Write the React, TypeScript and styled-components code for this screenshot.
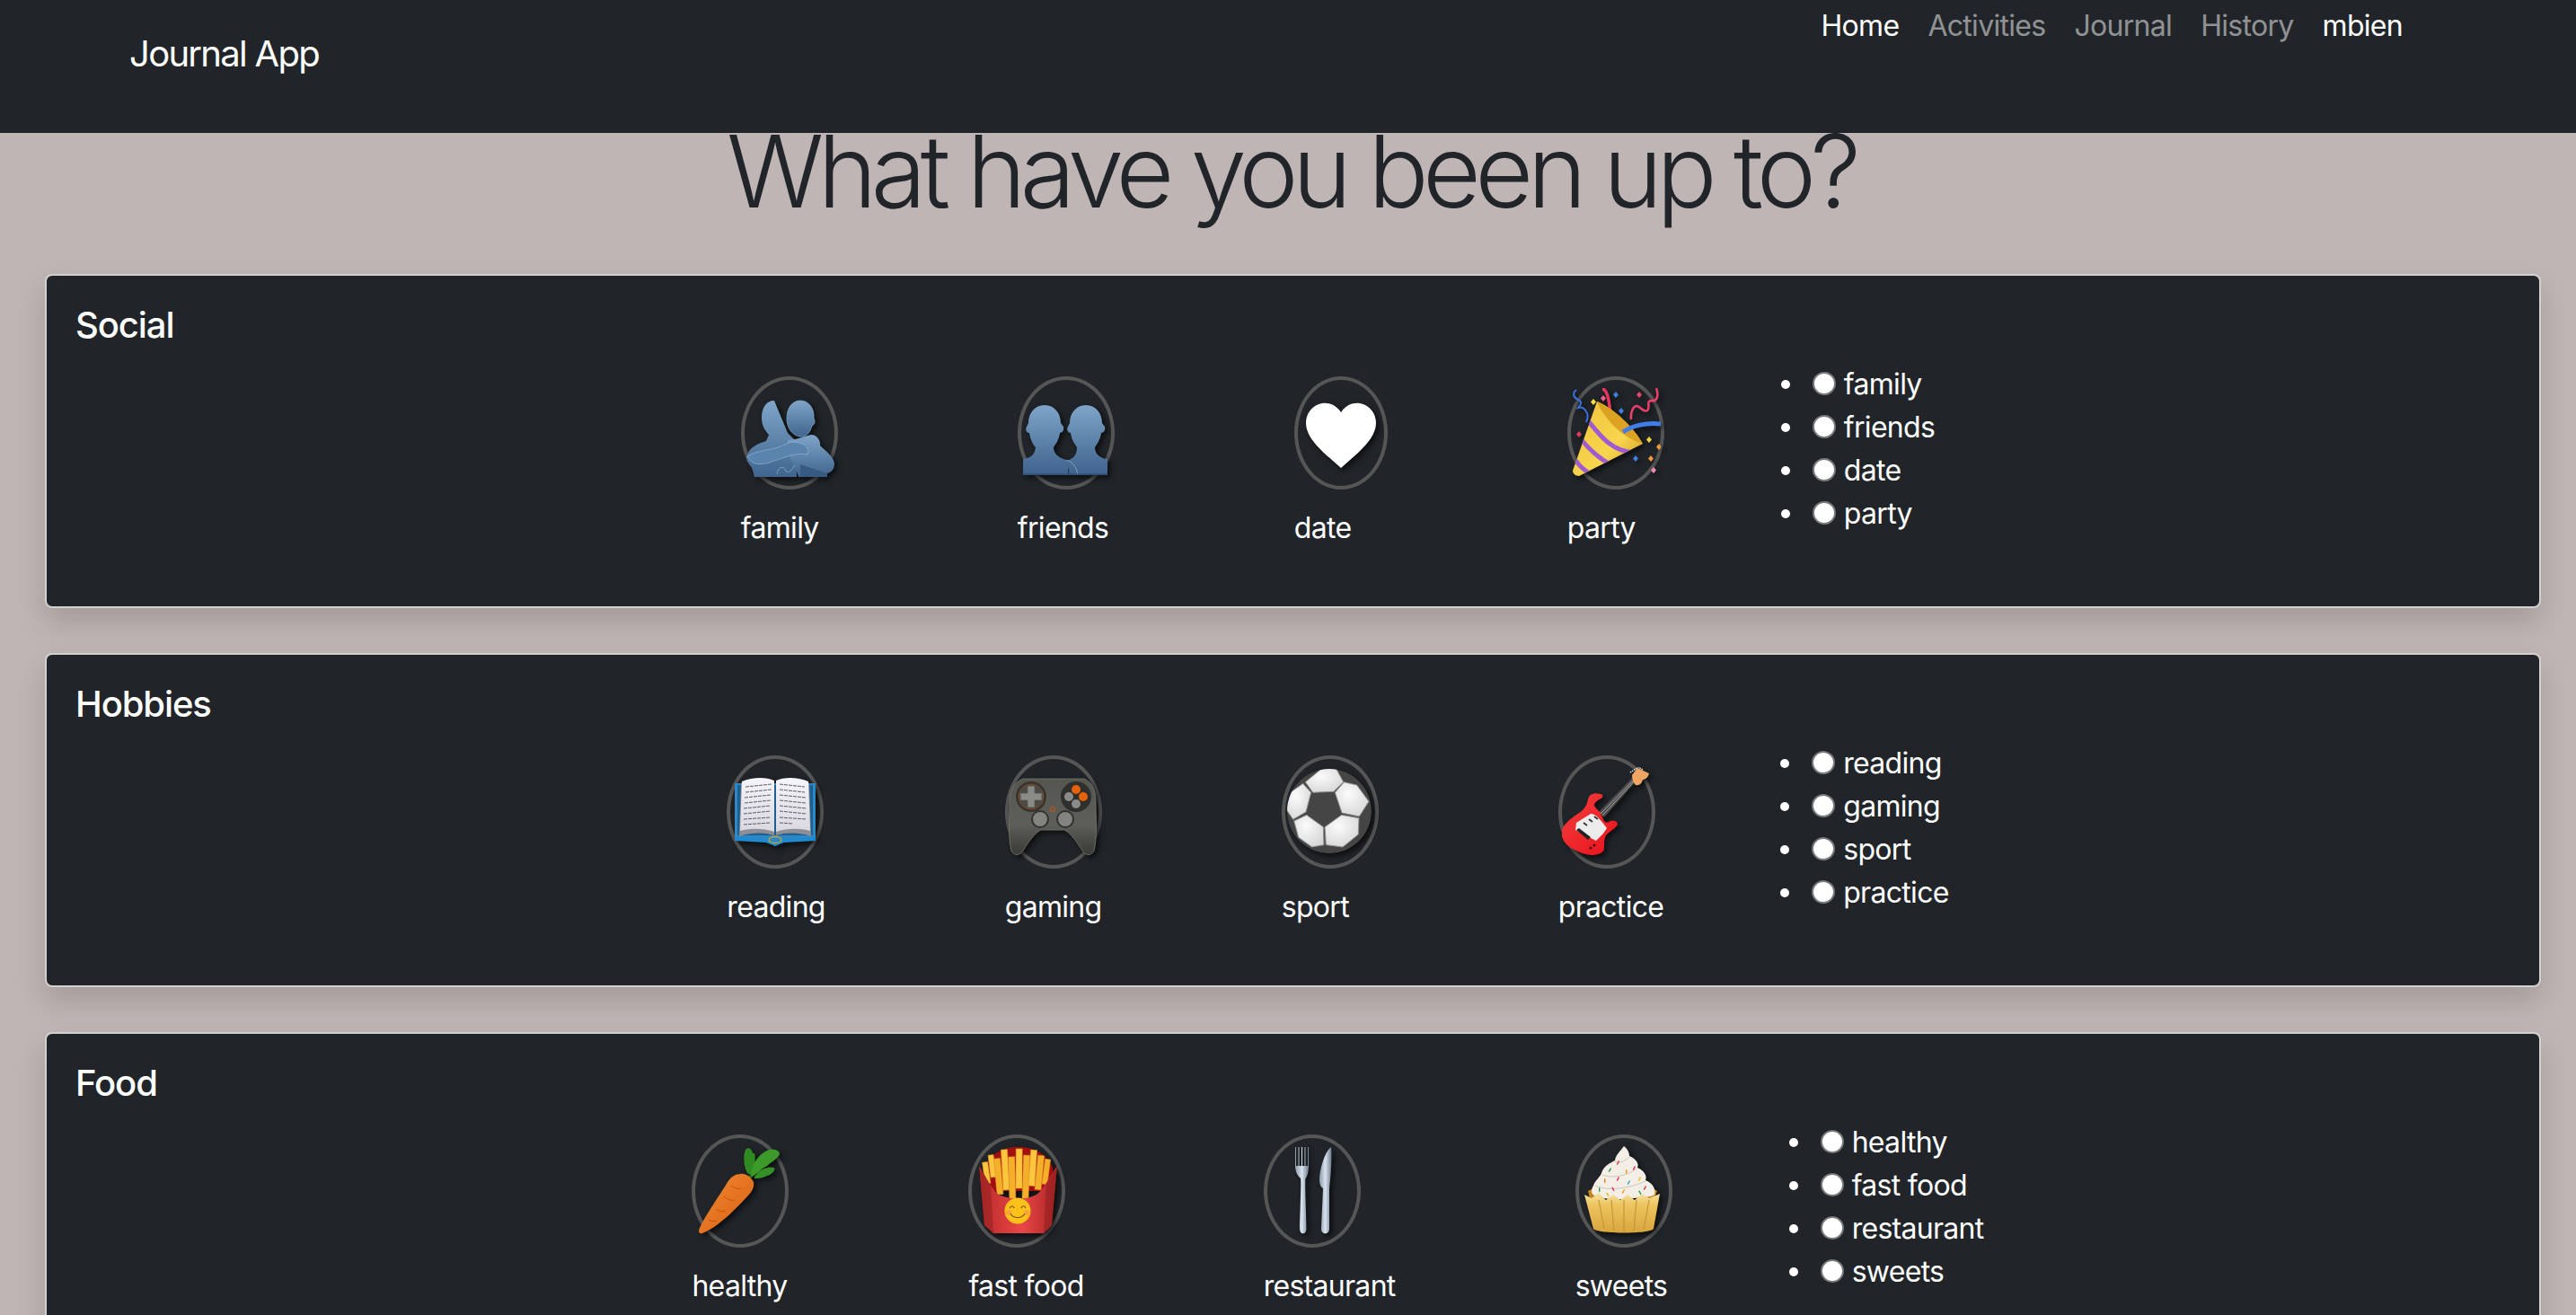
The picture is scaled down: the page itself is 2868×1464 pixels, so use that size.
import React from 'react';
import styled, {createGlobalStyle} from 'styled-components';

const GlobalStyle = createGlobalStyle`
  html, body {
    margin: 0;
    height: 100%;
    overflow: hidden;
    background: #bfb5b4;
  }
  body {
    font-family: Inter, "Liberation Sans", sans-serif;
    font-size: 32px;
    line-height: 48px;
    color: #212529;
  }
`

const Navbar = styled.nav`
  position: relative;
  z-index: 1;
  height: 148px;
  box-sizing: border-box;
  background: #212529;
  display: flex;
  justify-content: space-between;
  align-items: flex-start;
  padding: 5px 177px 0 144px;
`

const Brand = styled.a`
  color: white;
  font-size: 40px;
  line-height: 60px;
  margin-top: 25px;
  letter-spacing: -1.7px;
`

const NavLinks = styled.div`
  display: flex;
`

const NavLink = styled.a<{$active?: boolean}>`
  padding: 0 16px;
  letter-spacing: -0.7px;
  color: ${props => props.$active ? 'white' : 'rgba(255,255,255,.5)'};
`

const Title = styled.h1`
  position: relative;
  z-index: 2;
  margin: -25px 0 48px;
  padding-left: 6px;
  text-align: center;
  font-size: 112px;
  font-weight: 300;
  line-height: 134px;
  letter-spacing: -6.6px;
`

const Cards = styled.main`
  display: flex;
  flex-direction: column;
  gap: 50px;
  padding: 0 39px 0 50px;
`

const Card = styled.section`
  height: 372px;
  flex-shrink: 0;
  box-sizing: border-box;
  border: 2px solid #d3d1cf;
  border-radius: 8px;
  padding: 31px 32px;
  background: #212529;
  color: white;
  box-shadow: 0 16px 32px rgba(0,0,0,.15);
`

const CardTitle = styled.h5`
  margin: 0 0 18px;
  font-size: 40px;
  font-weight: 500;
  line-height: 48px;
  letter-spacing: -1.1px;
`

const Row = styled.div`
  display: flex;
  justify-content: center;
`

const Item = styled.div`
  display: flex;
  flex-direction: column;
  align-items: flex-start;
  margin: 15px 100px 0;
`

const Ring = styled.div<{$narrow?: boolean}>`
  width: ${props => props.$narrow ? 104 : 108}px;
  height: 126px;
  box-sizing: border-box;
  border: 4px solid #565656;
  border-radius: 50%;
  display: flex;
  justify-content: center;
  align-items: center;

  > svg {
    flex-shrink: 0;
    width: 100px;
    height: 100px;
    filter: drop-shadow(3px 3px 3px rgba(0,0,0,.65));
  }
`

const Label = styled.div`
  margin-top: 19px;
  letter-spacing: -0.7px;
`

const Options = styled.ul`
  margin: 0;
  padding: 0 0 0 65px;
  list-style: none;
  letter-spacing: -0.7px;
`

const Option = styled.li`
  position: relative;
  height: 48px;

  &::before {
    content: "";
    position: absolute;
    left: -35px;
    top: 19px;
    width: 10px;
    height: 10px;
    border-radius: 50%;
    background: white;
  }
`

const Radio = styled.input`
  appearance: none;
  width: 26px;
  height: 26px;
  box-sizing: border-box;
  margin: 0 9px 0 0;
  border: 2px solid #77797b;
  border-radius: 50%;
  background: white;
  vertical-align: -1px;
`

const Family = () => (
  <svg viewBox="0 0 100 100">
    <defs>
      <linearGradient id="blue" x1="0" y1="0" x2="0" y2="1">
        <stop offset="0" stopColor="#7fa6c9"/>
        <stop offset="1" stopColor="#3f648e"/>
      </linearGradient>
    </defs>
    <path d="M33 14C24 14 19 22 19 33C19 42 23 48 27 52L24 59C14 62 6 66 3 74C1 79 3 84 8 88L11 99H58L58 60L48 50Z" fill="url(#blue)"/>
    <path d="M62 14C53 14 47 22 47 34C47 44 53 53 62 54C69 55 73 49 75 42C78 41 79 37 77 34C78 22 71 14 62 14Z" fill="url(#blue)" stroke="#86aed0" strokeWidth=".7"/>
    <path d="M48 58C56 58 66 54 74 52C80 52 85 58 84 64C90 70 99 76 100 84C100 91 96 94 92 95V99H60C58 90 50 78 48 72Z" fill="url(#blue)"/>
    <path d="M3 76C16 68 32 70 47 62C53 59 60 60 66 63C70 66 72 70 70 74C58 71 40 79 27 83C17 86 8 86 3 76Z" fill="#5a84ac" stroke="#8db4d4" strokeWidth=".7"/>
    <path d="M36 96C37 89 42 85 46 92C48 96 52 92 56 86" fill="none" stroke="#8db4d4" strokeWidth=".8"/>
    <path d="M62 99V85L92 95V99Z" fill="#365a82"/>
  </svg>
)

const Friends = () => (
  <svg viewBox="0 0 100 100">
    <defs>
      <linearGradient id="bust" x1="0" y1="0" x2="0" y2="1">
        <stop offset="0" stopColor="#7ea5c9"/>
        <stop offset="1" stopColor="#3e628c"/>
      </linearGradient>
    </defs>
    <path d="M26 19C37 19 44 28 44 39L47 43C48 47 46 50 43 50C42 58 38 63 36 66C36 72 40 77 50 80L55 82C52 86 52 92 53 97H2V79C10 78 15 75 16 66C13 63 10 57 9 50C6 50 4 47 6 43L8 39C8 28 15 19 26 19Z" fill="url(#bust)"/>
    <path d="M72 19C83 19 90 28 90 39L93 43C94 47 92 50 89 50C88 58 84 63 82 66C82 72 86 78 96 79V97H53C54 92 52 86 50 82L55 79C60 77 62 72 62 66C60 63 56 58 55 50C52 50 50 47 52 43L54 39C54 28 61 19 72 19Z" fill="url(#bust)"/>
    <path d="M50 80C57 82 62 88 63 97" fill="none" stroke="#86aed0" strokeWidth=".8"/>
    <rect x="2" y="95.5" width="94" height="1.5" fill="#2e4d72"/>
  </svg>
)

const Heart = () => (
  <svg viewBox="0 0 100 100">
    <path d="M50 27C56 18 64 16 71 17C82 19 89 28 89 39C89 57 68 73 50 89C32 73 11 57 11 39C11 28 18 19 29 17C36 16 44 18 50 27Z" fill="white"/>
  </svg>
)

const Party = () => (
  <svg viewBox="0 0 100 100">
    <defs>
      <linearGradient id="cone" x1="0" y1="0" x2="1" y2="1">
        <stop offset="0" stopColor="#f0c13c"/>
        <stop offset=".6" stopColor="#f7d64e"/>
        <stop offset="1" stopColor="#c98d1c"/>
      </linearGradient>
      <clipPath id="coneClip">
        <path d="M29 15C42 19 72 50 80 62L9 98C5 98 2 95 2 92Z"/>
      </clipPath>
    </defs>
    <path d="M6 2C1 6 3 11 8 13C14 16 10 19 8 22C14 20 22 28 17 38" fill="none" stroke="#3b70dd" strokeWidth="2"/>
    <path d="M35 1C42 2 43 20 45 38" fill="none" stroke="#e8335f" strokeWidth="3.5"/>
    <path d="M67 35C66 26 70 20 73 20C78 20 80 28 85 25C89 22 83 14 90 14C96 15 98 9 95 0" fill="none" stroke="#ee3f6c" strokeWidth="2.5"/>
    <path d="M29 15C42 19 72 50 80 62L9 98C5 98 2 95 2 92Z" fill="url(#cone)"/>
    <g clipPath="url(#coneClip)" fill="none" stroke="#a15bd0" strokeWidth="5">
      <path d="M18 35C32 52 44 70 70 72"/>
      <path d="M12 58C22 70 36 82 50 88"/>
      <path d="M5 80C10 88 18 94 26 98"/>
    </g>
    <path d="M29 15C48 22 72 46 80 62C66 58 52 48 42 36C36 28 30 20 29 15Z" fill="#dca223"/>
    <path d="M58 49C68 42 84 38 100 40" fill="none" stroke="#3f7de8" strokeWidth="5"/>
    <g>
      <path d="M25 12l3 3.5-3 3.5-3-3.5z" fill="#f5e23c"/>
      <path d="M36 8l3 3.5-3 3.5-3-3.5z" fill="#ef5f8a"/>
      <path d="M50 4l3 3.5-3 3.5-3-3.5z" fill="#3d80e4"/>
      <path d="M56 22l3 3.5-3 3.5-3-3.5z" fill="#3d80e4"/>
      <path d="M76 4l3 3.5-3 3.5-3-3.5z" fill="#e8466e"/>
      <path d="M9 48l3 3.5-3 3.5-3-3.5z" fill="#dd3c5c"/>
      <path d="M87 54l3 3.5-3 3.5-3-3.5z" fill="#f3d53c"/>
      <path d="M98 62l3 3.5-3 3.5-3-3.5z" fill="#f09a3c"/>
      <path d="M72 75l3 3.5-3 3.5-3-3.5z" fill="#3d80e4"/>
      <path d="M89 75l3 3.5-3 3.5-3-3.5z" fill="#f09a3c"/>
      <path d="M92 88l3 3.5-3 3.5-3-3.5z" fill="#f58cb4"/>
    </g>
  </svg>
)

const Book = () => (
  <svg viewBox="0 0 100 100">
    <defs>
      <linearGradient id="page" x1="0" y1="0" x2="0" y2="1">
        <stop offset="0" stopColor="#f6f5fa"/>
        <stop offset="1" stopColor="#d9d8e0"/>
      </linearGradient>
    </defs>
    <path d="M5 18H95V81L58 83L50 86L42 83L5 81Z" fill="#2f88c4"/>
    <path d="M8 20H92V76H8Z" fill="#1d5f91"/>
    <path d="M10 77L12 18C24 13 40 13 49 17V76C36 72 22 73 10 77Z" fill="#8f8e94"/>
    <path d="M90 77L88 18C76 13 60 13 51 17V76C64 72 78 73 90 77Z" fill="#8f8e94"/>
    <path d="M11 71L13 16C25 11 40 11 49 15V72C36 68 23 68 11 71Z" fill="url(#page)"/>
    <path d="M89 71L87 16C75 11 60 11 51 15V72C64 68 77 68 89 71Z" fill="url(#page)"/>
    <g stroke="#5c5c64" strokeWidth="1" strokeDasharray="4 1">
      <path d="M17 22L46 19M17 28L46 25M16 34L45 31M16 40L45 37M15 46L45 43M15 52L45 49M15 58L45 56M15 64L45 62"/>
      <path d="M55 19L83 22M55 25L83 28M55 31L84 34M55 37L84 40M55 43L85 46M55 49L85 52M55 56L85 58M55 62L70 63"/>
    </g>
    <path d="M5 78L42 80L50 84L58 80L95 78V82L60 84L50 88L40 84L5 82Z" fill="#1e8ad0"/>
    <ellipse cx="50" cy="81" rx="7" ry="3.5" fill="none" stroke="#c9a52f" strokeWidth="1.3"/>
  </svg>
)

const Gamepad = () => (
  <svg viewBox="0 0 100 100">
    <defs>
      <linearGradient id="pad" x1="0" y1="0" x2="0" y2="1">
        <stop offset="0" stopColor="#55564f"/>
        <stop offset=".6" stopColor="#5e5f59"/>
        <stop offset="1" stopColor="#3a3a36"/>
      </linearGradient>
    </defs>
    <path d="M16 13H84C92 16 97 25 97 38C97 58 99 78 95 93C92 99 86 99 82 93C76 84 70 74 62 70H36C28 74 22 84 16 93C12 99 6 99 3 93C-1 78 1 58 1 38C1 25 8 16 16 13Z" fill="url(#pad)" stroke="#77786f" strokeWidth=".8"/>
    <circle cx="25" cy="33" r="17" fill="#343532"/>
    <circle cx="25" cy="33" r="14" fill="#4a4b46" stroke="#8d4a20" strokeWidth=".9"/>
    <path d="M21 21H29V29H37V37H29V45H21V37H13V29H21Z" fill="#8a8b85" stroke="#55564f" strokeWidth=".8"/>
    <circle cx="75" cy="33" r="17" fill="#2f302d"/>
    <circle cx="75" cy="25" r="5" fill="#e4620a"/>
    <circle cx="83" cy="33" r="5" fill="#e4620a"/>
    <circle cx="67" cy="33" r="5" fill="#8b8c87"/>
    <circle cx="75" cy="41" r="5" fill="#8b8c87"/>
    <circle cx="49" cy="47" r="2.5" fill="none" stroke="#b9521a" strokeWidth="1.2"/>
    <circle cx="35" cy="58" r="10" fill="#31322f"/>
    <circle cx="35" cy="58" r="8" fill="#83847e"/>
    <circle cx="63" cy="58" r="10" fill="#31322f"/>
    <circle cx="63" cy="58" r="8" fill="#83847e"/>
  </svg>
)

const Ball = () => (
  <svg viewBox="0 0 100 100">
    <defs>
      <clipPath id="ballClip"><circle cx="49" cy="49" r="47"/></clipPath>
      <radialGradient id="panel" cx=".4" cy=".35" r=".8">
        <stop offset="0" stopColor="#fbfbfb"/>
        <stop offset="1" stopColor="#d2d2d2"/>
      </radialGradient>
    </defs>
    <g clipPath="url(#ballClip)">
      <circle cx="49" cy="49" r="47" fill="#454545"/>
      <g transform="translate(-12 -25) scale(.3333)" fill="url(#panel)" stroke="#8d8d8d" strokeWidth="3" strokeLinejoin="round">
        <path d="M103 125L160 78H205L230 125L198 157L128 160Z"/>
        <path d="M38 170L95 130L122 160L105 225L62 250L38 215Z"/>
        <path d="M232 125L275 135L315 190L283 240L225 228L202 160Z"/>
        <path d="M65 255L107 235L163 275L165 335L125 342L80 310Z"/>
        <path d="M168 275L224 235L282 245L280 300L228 342L172 335Z"/>
      </g>
    </g>
  </svg>
)

const Guitar = () => (
  <svg viewBox="0 0 100 100">
    <defs>
      <linearGradient id="red" x1="0" y1="0" x2="1" y2="1">
        <stop offset="0" stopColor="#f44040"/>
        <stop offset="1" stopColor="#e8101a"/>
      </linearGradient>
    </defs>
    <path d="M41 50L80 10L84 14L47 56Z" fill="#4a4a4a"/>
    <path d="M43 52L82 12M45 54L83 13" stroke="#c9c9c9" strokeWidth=".7"/>
    <path d="M78 9L84 1L97 7C96 12 92 14 90 14C89 18 86 21 82 20C80 18 78 14 78 9Z" fill="#f0a662"/>
    <path d="M76 6L85 0L90 3" fill="none" stroke="#e8e8e8" strokeWidth="1.5" strokeDasharray="1.5 1"/>
    <path d="M43 30C36 28 30 30 29 36C28 42 25 46 22 49C14 54 6 60 2 66C-3 72 0 82 7 88C16 94 26 98 34 98C42 98 47 94 47 91C47 84 47 78 50 75C54 71 60 68 62 64C62 60 58 59 54 60C51 62 48 62 47 60C45 56 44 53 42 50C40 47 36 45 36 42C37 38 42 36 45 34C46 32 45 30 43 30Z" fill="url(#red)"/>
    <path d="M16 62L32 52C38 52 44 60 50 68L46 74L38 82L30 78L15 70Z" fill="#ececec"/>
    <path d="M16 70L19 68L32 78L29 81Z" fill="#222"/>
    <path d="M24 62L28 65M30 58L34 61M36 55L40 58" stroke="#333" strokeWidth="1.8"/>
    <circle cx="32" cy="90" r="1.6" fill="#501012"/>
    <circle cx="36" cy="87" r="1.6" fill="#501012"/>
  </svg>
)

const Carrot = () => (
  <svg viewBox="0 0 100 100">
    <defs>
      <linearGradient id="carrot" x1="0" y1="0" x2="1" y2="1">
        <stop offset="0" stopColor="#f08a32"/>
        <stop offset="1" stopColor="#d95f12"/>
      </linearGradient>
    </defs>
    <path d="M60 35L72 26" stroke="#2e6a18" strokeWidth="3"/>
    <path d="M58 30C54 22 53 12 56 4C60 0 63 4 64 8C68 6 66 14 67 20L63 33Z" fill="#2f8a22"/>
    <path d="M62 30C64 18 72 8 82 4C88 3 94 4 94 9C92 14 84 18 80 22C74 25 70 30 63 34Z" fill="#3c9a2a"/>
    <path d="M66 34C72 26 80 22 88 24C90 26 85 32 80 33C74 36 70 36 66 36Z" fill="#348f26"/>
    <path d="M50 31C56 30 62 34 65 40C66 46 63 51 59 55C46 69 26 90 8 97C4 98 3 95 5 91C12 76 27 55 36 40C40 34 45 31 50 31Z" fill="url(#carrot)"/>
    <path d="M40 44C44 47 47 48 51 47M32 56C36 59 40 61 44 60M23 70C27 73 31 73 34 72M15 82C18 84 21 84 24 83" fill="none" stroke="#c4540e" strokeWidth="1"/>
  </svg>
)

const Fries = () => {
  const sticks = [[15,18,24,6],[21,10,25,6],[28,14,40,7],[35,4,45,7],[42,12,50,7],[49,3,44,7],[56,10,48,7],[63,4,40,7],[70,10,38,7],[78,14,28,6]]
  return (
    <svg viewBox="0 0 100 100">
      <defs>
        <linearGradient id="box" x1="0" y1="0" x2="1" y2="0">
          <stop offset="0" stopColor="#b92a2a"/>
          <stop offset=".55" stopColor="#ea4646"/>
          <stop offset="1" stopColor="#a82424"/>
        </linearGradient>
      </defs>
      <path d="M14 24C20 8 36 1 52 1C68 1 84 8 90 24V50H14Z" fill="#a30f0f"/>
      {sticks.map(([x, y, h, w]) => <rect key={x} x={x} y={y} width={w} height={h} fill={x % 2 ? '#fbc53e' : '#f5b02a'} stroke="#e0962a" strokeWidth=".5" transform={`rotate(${(x - 48) / 4} ${x} ${y + h})`}/>)}
      <path d="M8 22C14 30 20 46 30 54C44 60 60 60 72 54C82 46 88 30 95 22L89 88L80 97H24L14 88Z" fill="url(#box)"/>
      <path d="M8 22L14 88L24 97L21 44Z M95 22L89 88L80 97L83 44Z" fill="#8f1d1d" opacity=".5"/>
      <circle cx="51" cy="72" r="14.5" fill="#fcc21b"/>
      <path d="M42 69C44 66 46 66 47 69M55 69C56 66 59 66 60 69M43 75C46 81 56 81 59 75" fill="none" stroke="#7a4a10" strokeWidth="1.2"/>
      <circle cx="41" cy="74" r="3" fill="#f28a4a" opacity=".55"/>
      <circle cx="61" cy="74" r="3" fill="#f28a4a" opacity=".55"/>
    </svg>
  )
}

const Cutlery = () => (
  <svg viewBox="0 0 100 100">
    <defs>
      <linearGradient id="steel" x1="0" y1="0" x2="1" y2="0">
        <stop offset="0" stopColor="#8d9aa8"/>
        <stop offset=".5" stopColor="#d7e2ee"/>
        <stop offset="1" stopColor="#6f7c8c"/>
      </linearGradient>
    </defs>
    <path d="M31 1H32V22H34.5V1H35.5V22H38V1H39V22H41.5V1H42.5V22H45V1H46V22C46 30 44 34 42.5 36C41.5 40 43.5 80 43.5 92C43.5 99 36 99 36 92C36 80 38 40 37 36C34 33 31 29 31 22Z" fill="url(#steel)"/>
    <path d="M71 1C66 4 59 20 58 37C58 43 60 46 62 47L60 92C60 99 69 99 69 92L69 47C71 30 72 12 71 1Z" fill="url(#steel)"/>
  </svg>
)

const Cupcake = () => {
  const sprinkles = [[44,16,'#e23b5a'],[35,24,'#2e9e4f'],[52,26,'#e8a020'],[62,22,'#d8366a'],[28,36,'#e0862a'],[44,34,'#e23b5a'],[56,38,'#35a0d8'],[68,34,'#e8c020'],[22,46,'#2e9e4f'],[36,46,'#d8366a'],[50,48,'#e8a020'],[74,44,'#e23b5a'],[66,50,'#2e9e4f'],[30,52,'#e8c020']] as const
  return (
    <svg viewBox="0 0 100 100">
      <defs>
        <linearGradient id="cup" x1="0" y1="0" x2="0" y2="1">
          <stop offset="0" stopColor="#f3e3a6"/>
          <stop offset=".3" stopColor="#edc45e"/>
          <stop offset="1" stopColor="#d9a53e"/>
        </linearGradient>
      </defs>
      <path d="M10 50C14 44 84 44 87 50L84 58H12Z" fill="#c4861a"/>
      <path d="M50 0C55 4 56 8 56 11C64 14 67 20 65 24C73 27 76 34 74 38C82 41 86 48 84 54C78 58 68 56 60 58C48 60 30 60 22 56C14 56 12 50 16 44C18 38 24 34 25 30C27 22 36 18 40 16C41 9 46 6 50 0Z" fill="#f4efe6"/>
      <path d="M26 32C36 36 52 34 64 25M18 44C32 50 54 48 74 39M40 17C46 20 52 16 56 12" fill="none" stroke="#cfc7b8" strokeWidth="1"/>
      {sprinkles.map(([x, y, c]) => <rect key={`${x}-${y}`} x={x} y={y} width="1.5" height="5" rx=".7" fill={c} transform={`rotate(${x % 3 * 30 - 30} ${x} ${y})`}/>)}
      <path d="M6 54L14 58L22 52L30 60L38 54L46 60L54 54L62 60L70 53L78 58L90 53L83 92C80 98 20 98 16 92Z" fill="url(#cup)"/>
      <path d="M22 60L28 92M36 60L39 95M50 60V96M64 60L61 95M78 60L72 93" stroke="#c8953a" strokeWidth="1.2" fill="none"/>
    </svg>
  )
}

type Activity = {
  name: string
  icon: React.ReactNode
  narrow?: boolean
}

const sections: {title: string, options: string[], items: Activity[]}[] = [
  {
    title: 'Social',
    options: ['family', 'friends', 'date', 'party'],
    items: [
      {name: 'family', icon: <Family/>},
      {name: 'friends', icon: <Friends/>},
      {name: 'date', icon: <Heart/>, narrow: true},
      {name: 'party', icon: <Party/>}
    ]
  },
  {
    title: 'Hobbies',
    options: ['reading', 'gaming', 'sport', 'practice'],
    items: [
      {name: 'reading', icon: <Book/>},
      {name: 'gaming', icon: <Gamepad/>},
      {name: 'sport', icon: <Ball/>},
      {name: 'practice', icon: <Guitar/>}
    ]
  },
  {
    title: 'Food',
    options: ['healthy', 'fast food', 'restaurant', 'sweets'],
    items: [
      {name: 'healthy', icon: <Carrot/>},
      {name: 'fast food', icon: <Fries/>},
      {name: 'restaurant', icon: <Cutlery/>},
      {name: 'sweets', icon: <Cupcake/>}
    ]
  }
]

function App() {
  return (
    <>
      <GlobalStyle/>
      <Navbar>
        <Brand>Journal App</Brand>
        <NavLinks>
          <NavLink $active>Home</NavLink>
          <NavLink>Activities</NavLink>
          <NavLink>Journal</NavLink>
          <NavLink>History</NavLink>
          <NavLink $active>mbien</NavLink>
        </NavLinks>
      </Navbar>
      <Title>What have you been up to?</Title>
      <Cards>
        {sections.map(section => (
          <Card key={section.title}>
            <CardTitle>{section.title}</CardTitle>
            <Row>
              {section.items.map(item => (
                <Item key={item.name}>
                  <Ring $narrow={item.narrow}>{item.icon}</Ring>
                  <Label>{item.name}</Label>
                </Item>
              ))}
              <Options>
                {section.options.map(option => (
                  <Option key={option}>
                    <Radio type="radio" name={section.title}/>{option}
                  </Option>
                ))}
              </Options>
            </Row>
          </Card>
        ))}
      </Cards>
    </>
  );
}

export default App;
